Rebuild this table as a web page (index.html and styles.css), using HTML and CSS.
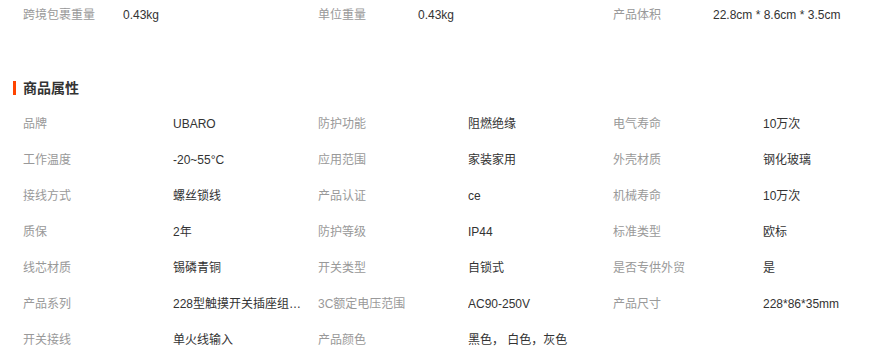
FILE: index.html
```html
<!DOCTYPE html>
<html lang="zh-CN">
<head>
<meta charset="utf-8">
<title>商品属性</title>
<link rel="stylesheet" href="styles.css">
</head>
<body>
<div class="page">
  <ul class="logistics">
    <li><span class="lk">跨境包裹重量</span><span class="lv">0.43kg</span></li>
    <li><span class="lk">单位重量</span><span class="lv">0.43kg</span></li>
    <li><span class="lk">产品体积</span><span class="lv">22.8cm * 8.6cm * 3.5cm</span></li>
  </ul>

  <h3 class="section-title">商品属性</h3>

  <ul class="props">
    <li><span class="pk">品牌</span><span class="pv">UBARO</span></li>
    <li><span class="pk">防护功能</span><span class="pv">阻燃绝缘</span></li>
    <li><span class="pk">电气寿命</span><span class="pv">10万次</span></li>

    <li><span class="pk">工作温度</span><span class="pv">-20~55°C</span></li>
    <li><span class="pk">应用范围</span><span class="pv">家装家用</span></li>
    <li><span class="pk">外壳材质</span><span class="pv">钢化玻璃</span></li>

    <li><span class="pk">接线方式</span><span class="pv">螺丝锁线</span></li>
    <li><span class="pk">产品认证</span><span class="pv">ce</span></li>
    <li><span class="pk">机械寿命</span><span class="pv">10万次</span></li>

    <li><span class="pk">质保</span><span class="pv">2年</span></li>
    <li><span class="pk">防护等级</span><span class="pv">IP44</span></li>
    <li><span class="pk">标准类型</span><span class="pv">欧标</span></li>

    <li><span class="pk">线芯材质</span><span class="pv">锡磷青铜</span></li>
    <li><span class="pk">开关类型</span><span class="pv">自锁式</span></li>
    <li><span class="pk">是否专供外贸</span><span class="pv">是</span></li>

    <li><span class="pk">产品系列</span><span class="pv" title="228型触摸开关插座组合套装">228型触摸开关插座组合套装</span></li>
    <li><span class="pk">3C额定电压范围</span><span class="pv">AC90-250V</span></li>
    <li><span class="pk">产品尺寸</span><span class="pv">228*86*35mm</span></li>

    <li><span class="pk">开关接线</span><span class="pv">单火线输入</span></li>
    <li><span class="pk">产品颜色</span><span class="pv">黑色， 白色，灰色</span></li>
  </ul>
</div>
</body>
</html>
```

FILE: styles.css
```css
html, body {
  margin: 0;
  padding: 0;
  background: #fff;
}

body {
  font-family: "Liberation Sans", "Noto Sans CJK SC", sans-serif;
  font-size: 12px;
  color: #333;
}

.page {
  width: 889px;
}

ul {
  list-style: none;
  margin: 0;
  padding: 0;
}

.logistics {
  display: grid;
  grid-template-columns: repeat(3, 295px);
  padding-left: 23px;
}

.logistics li {
  display: flex;
  height: 31px;
  line-height: 31px;
}

.lk {
  width: 100px;
  color: #999;
  flex: none;
}

.lv {
  color: #333;
  white-space: nowrap;
}

.section-title {
  display: flex;
  align-items: center;
  height: 14px;
  margin: 50px 0 11px 13px;
  padding-left: 7px;
  border-left: 3px solid #ff4400;
  font-size: 14px;
  font-weight: bold;
  line-height: 20px;
  color: #333;
}

.props {
  display: grid;
  grid-template-columns: repeat(3, 295px);
  padding-left: 23px;
}

.props li {
  display: flex;
  height: 36px;
  line-height: 36px;
}

.pk {
  width: 150px;
  flex: none;
  color: #999;
  white-space: nowrap;
}

.pv {
  width: 130px;
  color: #333;
  white-space: nowrap;
  overflow: hidden;
  text-overflow: ellipsis;
}
```
